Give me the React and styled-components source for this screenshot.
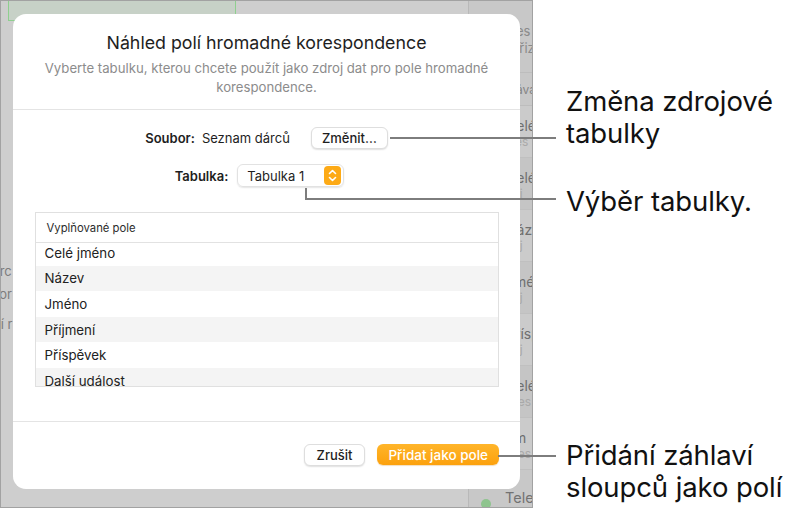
import React from 'react';
import styled, { createGlobalStyle } from 'styled-components';

const GlobalStyle = createGlobalStyle`
  html, body {
    margin: 0;
    padding: 0;
    background: #ffffff;
  }
  body {
    font-family: Inter, "Liberation Sans", sans-serif;
    -webkit-font-smoothing: antialiased;
  }
`;

const Frame = styled.div`
  position: relative;
  display: flex;
  width: 801px;
  height: 513px;
  overflow: hidden;
  background: #ffffff;
`;

const Shot = styled.div`
  position: relative;
  display: grid;
  grid-template-columns: 1fr 64px;
  width: 533px;
  height: 508px;
  box-sizing: border-box;
  border: 1px solid #a2a2a2;
  background: #cecece;
  overflow: hidden;
`;

const MainArea = styled.div`
  display: flex;
  flex-direction: column;
  min-width: 0;
`;

const GreenCell = styled.div`
  margin-left: 7px;
  width: 226px;
  height: 19px;
  background: #c7d1c7;
  border-left: 1px solid #8fcf8f;
  border-right: 1px solid #8fcf8f;
  border-bottom: 1px solid #8fcf8f;
`;

const BackdropText = styled.div`
  margin: 243px 0 0 -18px;
  display: flex;
  flex-direction: column;
  align-items: flex-start;
  gap: 8px;
  font-size: 13px;
  line-height: 15px;
  color: #7c7c7c;
  white-space: nowrap;

  span:last-child {
    margin: 7px 0 0 -9px;
  }
`;

const Sidebar = styled.div`
  display: flex;
  flex-direction: column;
  border-left: 1px solid #b9b9b9;
  background: #c8c8c8;
`;

const SideHead = styled.div`
  height: 72px;
  box-sizing: border-box;
  padding: 22px 0 0 34px;
  font-size: 13px;
  line-height: 17px;
  color: #8a8a8a;
  border-bottom: 1px solid #bdbdbd;
  white-space: nowrap;
`;

const SideLabel = styled.div`
  height: 33px;
  box-sizing: border-box;
  padding: 9px 0 0 38px;
  font-size: 12px;
  color: #858585;
  border-bottom: 1px solid #bdbdbd;
  white-space: nowrap;
`;

const SideRow = styled.div`
  height: 52px;
  box-sizing: border-box;
  padding: 11px 0 0 37px;
  background: ${(p) => (p.shade ? '#c5c5c5' : '#cbcbcb')};
  border-bottom: 1px solid #c0c0c0;
  white-space: nowrap;
`;

const SideTitle = styled.div`
  font-size: 14px;
  line-height: 17px;
  color: #6f6f6f;
`;

const SideSub = styled.div`
  font-size: 12px;
  line-height: 16px;
  color: #a9a9a9;
`;

const SideFoot = styled.div`
  display: flex;
  align-items: flex-start;
  gap: 14px;
  padding-left: 12px;
  font-size: 14.5px;
  line-height: 17px;
  color: #727272;
  white-space: nowrap;

  span:last-child {
    margin-top: 19px;
  }
`;

const Dot = styled.span`
  flex: 0 0 10px;
  height: 10px;
  margin-top: 29px;
  border-radius: 50%;
  background: #8ec48e;
`;

const Dialog = styled.div`
  position: absolute;
  left: 12px;
  top: 13px;
  width: 507px;
  height: 475px;
  display: flex;
  flex-direction: column;
  background: #ffffff;
  border-radius: 13px;
  overflow: hidden;
`;

const Header = styled.div`
  height: 96px;
  box-sizing: border-box;
  padding-top: 18px;
  text-align: center;
  border-bottom: 1px solid #e4e4e4;
`;

const Title = styled.h1`
  margin: 0;
  font-size: 17.8px;
  line-height: 22px;
  font-weight: 400;
  color: #1e1e1e;
`;

const Subtitle = styled.p`
  margin: 5px auto 0;
  width: 480px;
  font-size: 13.2px;
  line-height: 19px;
  color: #8c8c8c;
`;

const Body = styled.div`
  flex: 0 0 312px;
  display: flex;
  flex-direction: column;
  align-items: center;
  box-sizing: border-box;
  padding-top: 17px;
  border-bottom: 1px solid #e4e4e4;
`;

const FieldRow = styled.div`
  display: flex;
  align-items: center;
  gap: ${(p) => p.gap || 8}px;
  height: ${(p) => p.h}px;
  margin: ${(p) => p.m || '0'};
  font-size: 13px;
  color: #1e1e1e;
`;

const Label = styled.span`
  font-weight: 600;
`;

const Button = styled.button`
  height: ${(p) => p.h || 22}px;
  padding: 0 ${(p) => p.px || 10}px;
  border: 1px solid #dedede;
  border-radius: 6px;
  background: #ffffff;
  box-shadow: 0 1px 1.5px rgba(0, 0, 0, 0.12);
  font-family: inherit;
  font-size: 13px;
  font-weight: 500;
  color: #1e1e1e;
  margin-left: ${(p) => p.ml || 0}px;
`;

const PrimaryButton = styled(Button)`
  border: none;
  background: linear-gradient(#ffb52a, #fca10d);
  box-shadow: 0 1px 1px rgba(200, 120, 0, 0.25);
  color: #ffffff;
  font-size: 13.5px;
`;

const Popup = styled.div`
  display: flex;
  align-items: center;
  justify-content: space-between;
  width: 107px;
  height: 23px;
  box-sizing: border-box;
  padding: 0 2px 0 9px;
  border: 1px solid #e2e2e2;
  border-radius: 6px;
  box-shadow: 0 1px 1.5px rgba(0, 0, 0, 0.1);
  font-size: 13px;
`;

const Stepper = styled.span`
  display: flex;
  align-items: center;
  justify-content: center;
  width: 17px;
  height: 19px;
  border-radius: 4px;
  background: #fdaa16;
`;

const Table = styled.div`
  width: 464px;
  height: 175px;
  margin-top: 25px;
  box-sizing: border-box;
  border: 1px solid #e0e0e0;
  display: flex;
  flex-direction: column;
  overflow: hidden;
`;

const TableHead = styled.div`
  position: relative;
  z-index: 1;
  flex: 0 0 29px;
  display: flex;
  align-items: center;
  padding-left: 11px;
  background: #ffffff;
  border-bottom: 1px solid #e2e2e2;
  font-size: 11.3px;
  color: #2c2c2c;
`;

const Rows = styled.div`
  margin-top: -3px;
`;

const Row = styled.div`
  height: 25.6px;
  display: flex;
  align-items: center;
  padding-left: 9px;
  background: ${(p) => (p.odd ? '#f4f4f4' : '#ffffff')};
  font-size: 13.3px;
  color: #222222;
`;

const Footer = styled.div`
  flex: 1;
  display: flex;
  justify-content: flex-end;
  align-items: flex-start;
  gap: 12px;
  padding: 22px 21px 0 0;
`;

const Annotations = styled.div`
  flex: 1;
  display: flex;
  flex-direction: column;
  padding: 85px 0 0 33px;
  font-size: 27.5px;
  line-height: 32px;
  color: #111111;
  letter-spacing: -0.1px;
  white-space: nowrap;
`;

const Note = styled.div`
  margin-top: ${(p) => p.mt || 0}px;
`;

const Callouts = styled.svg`
  position: absolute;
  left: 0;
  top: 0;
  pointer-events: none;
`;

const sideRows = [
  ['Celé', 'Hes'],
  ['Celé', 'Jej'],
  ['Název', 'Jej'],
  ['Jméno', 'Jej'],
  ['Příspěvek', 'Jej'],
  ['Celé', 'Hles'],
  ['Jm', 'Hles'],
];

const fields = ['Celé jméno', 'Název', 'Jméno', 'Příjmení', 'Příspěvek', 'Další událost'];

function StepperIcon() {
  return (
    <Stepper>
      <svg width="9" height="13" viewBox="0 0 9 13" fill="none">
        <path d="M1.5 4.5 L4.5 1.5 L7.5 4.5" stroke="#fff" strokeWidth="1.6" strokeLinecap="round" strokeLinejoin="round" />
        <path d="M1.5 8.5 L4.5 11.5 L7.5 8.5" stroke="#fff" strokeWidth="1.6" strokeLinecap="round" strokeLinejoin="round" />
      </svg>
    </Stepper>
  );
}

export default function App() {
  return (
    <>
      <GlobalStyle />
      <Frame>
        <Shot>
          <MainArea>
            <GreenCell />
            <BackdropText>
              <span>Dárc</span>
              <span>Spor</span>
              <span>Další r</span>
            </BackdropText>
          </MainArea>
          <Sidebar>
            <SideHead>
              Přes<br />
              Spřiz
            </SideHead>
            <SideLabel>Náva</SideLabel>
            {sideRows.map(([t, s], i) => (
              <SideRow key={i} shade={i % 2 === 1}>
                <SideTitle>{t}</SideTitle>
                <SideSub>{s}</SideSub>
              </SideRow>
            ))}
            <SideFoot>
              <Dot />
              <span>Telefon</span>
            </SideFoot>
          </Sidebar>

          <Dialog>
            <Header>
              <Title>Náhled polí hromadné korespondence</Title>
              <Subtitle>
                Vyberte tabulku, kterou chcete použít jako zdroj dat pro pole hromadné korespondence.
              </Subtitle>
            </Header>
            <Body>
              <FieldRow h={22} gap={7}>
                <Label>Soubor:</Label>
                <span>Seznam dárců</span>
                <Button h={22} px={10} ml={14}>Změnit…</Button>
              </FieldRow>
              <FieldRow h={23} gap={9} m="15px 0 0 -14px">
                <Label>Tabulka:</Label>
                <Popup>
                  Tabulka 1
                  <StepperIcon />
                </Popup>
              </FieldRow>
              <Table>
                <TableHead>Vyplňované pole</TableHead>
                <Rows>
                  {fields.map((f, i) => (
                    <Row key={f} odd={i % 2 === 1}>{f}</Row>
                  ))}
                </Rows>
              </Table>
            </Body>
            <Footer>
              <Button h={22} px={12}>Zrušit</Button>
              <PrimaryButton h={21} px={11}>Přidat jako pole</PrimaryButton>
            </Footer>
          </Dialog>
        </Shot>

        <Annotations>
          <Note>Změna zdrojové<br />tabulky</Note>
          <Note mt={36}>Výběr tabulky.</Note>
          <Note mt={222}>Přidání záhlaví<br />sloupců jako polí</Note>
        </Annotations>

        <Callouts width="801" height="513">
          <g stroke="#7d7d7d" strokeWidth="2" fill="none">
            <path d="M390 138 H556" />
            <path d="M306 188 V199 H556" />
            <path d="M498 456 H556" />
          </g>
        </Callouts>
      </Frame>
    </>
  );
}
